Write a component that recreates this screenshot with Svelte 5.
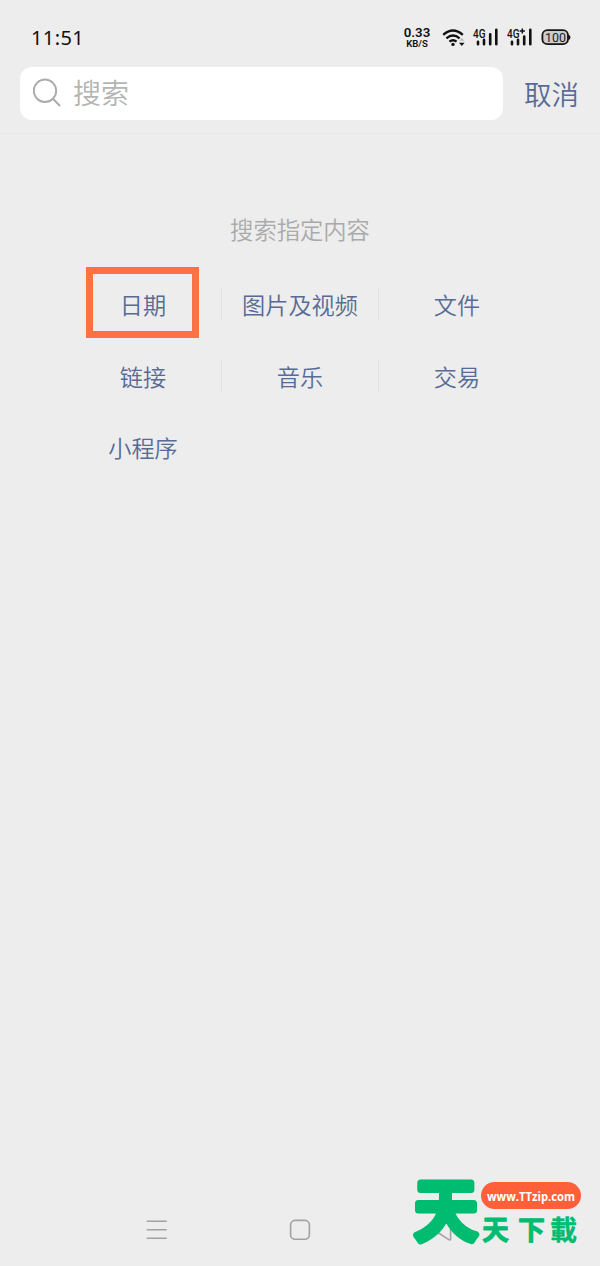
<script>
  const rows = [
    ['日期', '图片及视频', '文件'],
    ['链接', '音乐', '交易'],
    ['小程序']
  ];
</script>

<div class="screen">
  <header class="status">
    <span class="time">11:51</span>
    <div class="speed"><b>0.33</b><small>KB/S</small></div>
    <svg class="wifi" width="24" height="20" viewBox="0 0 24 20">
      <g fill="none" stroke="#111" stroke-width="2.3">
        <path d="M1.2 6.8Q11 -1.8 20.8 6.8" />
        <path d="M4.4 10.3Q11 4.7 17.6 10.3" />
        <path d="M7.4 13.7Q11 10.9 14.6 13.7" />
      </g>
      <circle cx="11" cy="16.4" r="1.7" fill="#111" />
      <path d="M17.3 12.7l2.5-2.8 2.5 2.8z" fill="#bbb" />
      <path d="M17 14.7h5.6l-2.8 3.2z" fill="#111" />
    </svg>
    <svg class="sig" width="26" height="20" viewBox="0 0 26 20">
      <text x="0" y="9.6" textLength="12.5" lengthAdjust="spacingAndGlyphs">4G</text>
      <path d="M5 13.7v2.6M11 11.9v4.4M17.2 6.3v10M23.3 1.8v14.5" />
    </svg>
    <svg class="sig" width="26" height="20" viewBox="0 0 26 20">
      <text x="0" y="9.6" textLength="12.5" lengthAdjust="spacingAndGlyphs">4G</text>
      <path class="plus" d="M15.3 .4v5.2M12.7 3h5.2" />
      <path d="M5 13.7v2.6M11 11.9v4.4M17.2 8.6v7.7M23.3 1.8v14.5" />
    </svg>
    <svg class="battery" width="30" height="18" viewBox="0 0 30 18">
      <rect x="1.4" y="1.2" width="25.6" height="14" rx="5" fill="#ccc" stroke="#151515" stroke-width="1.8" />
      <path d="M27.4 5.4q2 .4 2 2.8t-2 2.8z" fill="#151515" />
      <text x="4" y="12.6" textLength="21" lengthAdjust="spacingAndGlyphs">100</text>
    </svg>
  </header>

  <div class="searchbar">
    <div class="field">
      <svg width="30" height="30" viewBox="0 0 30 30" fill="none" stroke="#acacac" stroke-width="2">
        <circle cx="12" cy="12.8" r="11.2" />
        <path d="M20 20.8l7 7.2" />
      </svg>
      <span>搜索</span>
    </div>
    <span class="cancel">取消</span>
  </div>

  <main>
    <h2>搜索指定内容</h2>
    <div class="grid">
      {#each rows as row, r}
        {#each row as item, c}
          <div class="cell" class:divided={c < 2 && r < 2} class:marked={r === 0 && c === 0}>{item}</div>
        {/each}
      {/each}
    </div>
  </main>

  <nav>
    <svg width="22" height="22" viewBox="0 0 22 22" stroke="#a2a2a2" stroke-width="1.6">
      <path d="M.7 2.3h20M.7 10.8h20M.7 19.2h20" />
    </svg>
    <svg width="22" height="22" viewBox="0 0 22 22" fill="none" stroke="#a2a2a2" stroke-width="1.6">
      <rect x="1.6" y="1.4" width="18.8" height="18.8" rx="4.5" />
    </svg>
    <svg width="22" height="22" viewBox="0 0 22 22" fill="none" stroke="#a2a2a2" stroke-width="1.6">
      <path d="M18.6 1.5v18.3q0 1.8-1.8.8L5 13q-2-1.4 0-3L15.5 2" />
    </svg>
  </nav>

  <svg class="brand" width="195" height="95" viewBox="0 0 195 95">
    <rect x="76" y="11" width="100" height="27" rx="13.5" fill="#ff6039" />
    <text class="url" x="82" y="29.5" textLength="88" lengthAdjust="spacingAndGlyphs">www.TTzip.com</text>
    <text class="big" transform="translate(9.2 63.6) scale(1.04 1.1)" font-size="61">天</text>
    <text class="small" x="77" y="69">天</text>
    <text class="small" x="113" y="69">下</text>
    <text class="small thin" x="145" y="69">載</text>
  </svg>
</div>

<style>
  :global(body) { margin: 0; background: #ededed; }
  .screen {
    position: relative;
    display: flex;
    flex-direction: column;
    width: 600px;
    height: 1266px;
    overflow: hidden;
    background: #ededed;
    font-family: "Noto Sans CJK SC", sans-serif;
  }
  .status {
    display: flex;
    align-items: center;
    box-sizing: border-box;
    height: 67px;
    padding: 8px 29px 0 31px;
    color: #111;
  }
  .time {
    flex: 1;
    font-family: "Noto Sans", sans-serif;
    font-size: 20px;
    line-height: 24px;
    letter-spacing: .4px;
  }
  .speed {
    display: flex;
    flex-direction: column;
    align-items: center;
    width: 28px;
    margin: -1px 11px 0 0;
    font-family: Roboto, sans-serif;
  }
  .speed b { font-size: 13.3px; line-height: 12px; font-weight: 600; }
  .speed small { font-size: 9.6px; line-height: 9px; font-weight: 600; }
  .wifi { margin-right: 7px; }
  .sig { margin-right: 8px; overflow: visible; }
  .sig path { fill: none; stroke: #111; stroke-width: 2.6; stroke-linecap: round; }
  .sig .plus { stroke-width: 1.5; stroke-linecap: butt; }
  .sig text { font: 500 12px Roboto, sans-serif; fill: #111; }
  .battery text { font: 400 12.5px Roboto, sans-serif; fill: #222; }
  .searchbar {
    display: flex;
    align-items: center;
    box-sizing: border-box;
    height: 67px;
    padding: 0 20px 14px;
    border-bottom: 1px solid #e7e7e7;
  }
  .field {
    display: flex;
    align-items: center;
    box-sizing: border-box;
    width: 483px;
    height: 53px;
    padding-left: 13px;
    border-radius: 12px;
    background: #fff;
    color: #b4b4b4;
    font-size: 28px;
    font-weight: 350;
  }
  .field span { margin: -2px 0 0 10px; }
  .cancel { margin-left: 21px; color: #576b95; font-size: 27.5px; font-weight: 350; white-space: nowrap; }
  main { flex: 1; }
  h2 {
    margin: 78px 0 0;
    color: #aaa;
    font-size: 23.3px;
    line-height: 34px;
    font-weight: 350;
    text-align: center;
  }
  .grid {
    display: grid;
    grid-template-columns: repeat(3, 157px);
    grid-auto-rows: 71.7px;
    justify-content: center;
    margin-top: 22px;
  }
  .cell {
    position: relative;
    display: flex;
    align-items: center;
    justify-content: center;
    color: #576b95;
    font-size: 23.2px;
    font-weight: 350;
  }
  .divided::after {
    content: "";
    position: absolute;
    right: 0;
    top: 20px;
    width: 1px;
    height: 32px;
    background: #e1e1e1;
  }
  .marked::before {
    content: "";
    position: absolute;
    left: 21.5px;
    top: -1px;
    box-sizing: border-box;
    width: 113px;
    height: 71px;
    border: 7px solid #ff7043;
  }
  nav {
    display: flex;
    justify-content: space-between;
    padding: 0 146px 25px;
  }
  nav svg { display: block; }
  .brand { position: absolute; left: 405px; top: 1171px; overflow: visible; }
  .brand text { font-family: "Noto Sans CJK TC", sans-serif; }
  .brand .url { font: 700 13px "Open Sans", sans-serif; fill: #fff; }
  .brand .big { font-weight: 500; fill: #00bc70; stroke: #00bc70; stroke-width: 6.5; stroke-linejoin: round; }
  .brand .small { font-size: 27px; font-weight: 700; fill: #00bc70; stroke: #00bc70; stroke-width: .9; stroke-linejoin: round; }
  .brand .thin { stroke-width: .3; }
</style>
